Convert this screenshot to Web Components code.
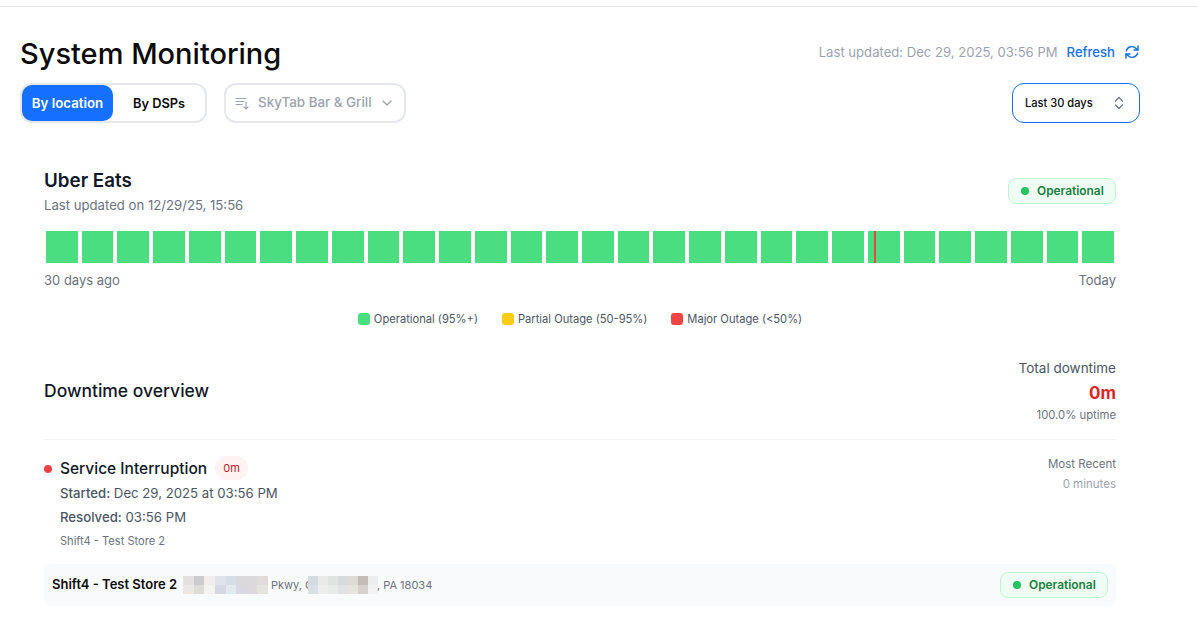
<!DOCTYPE html>
<html lang="en">
<head>
<meta charset="utf-8">
<title>System Monitoring</title>
<style>
  html, body { margin: 0; padding: 0; background: #fff; height: 100%; overflow: hidden; }
  body { font-family: "Inter", "Liberation Sans", sans-serif; color: #111827; }
</style>
</head>
<body>

<monitor-page>
  <page-header></page-header>
  <page-filters></page-filters>
  <service-card name="Uber Eats" updated="Last updated on 12/29/25, 15:56">
    <uptime-bars days="30" incident="23"></uptime-bars>
    <status-legend></status-legend>
    <downtime-summary total="0m" uptime="100.0% uptime"></downtime-summary>
    <downtime-entry title="Service Interruption" duration="0m" started="Dec 29, 2025 at 03:56 PM" resolved="03:56 PM" store="Shift4 - Test Store 2" recency="Most Recent" ago="0 minutes"></downtime-entry>
    <store-row name="Shift4 - Test Store 2"></store-row>
  </service-card>
</monitor-page>

<script>
// small helper so each element only has to say what goes in its shadow root
class ShadowElement extends HTMLElement {
  render(html) {
    if (!this.shadowRoot) this.attachShadow({mode: 'open'});
    this.shadowRoot.innerHTML = html;
  }
}

class MonitorPage extends ShadowElement {
  connectedCallback() {
    this.render(`
      <style>
        :host { display: block; border-top: 1px solid #e5e7eb; margin-top: 6px; padding: 0 58px 0 20px; }
      </style>
      <slot></slot>`);
  }
}

class PageHeader extends ShadowElement {
  connectedCallback() {
    this.render(`
      <style>
        :host { display: flex; justify-content: space-between; align-items: center; box-sizing: border-box; height: 76px; padding-top: 16px; }
        h1 { margin: 0; font-size: 29px; font-weight: 500; color: #0a0a0a; }
        .right { display: flex; align-items: center; font-size: 13.1px; color: #9ca3af; margin-top: -2px; }
        .refresh { color: #1570ef; font-weight: 500; margin-left: 9px; }
        svg { margin-left: 9px; display: block; }
      </style>
      <h1>System Monitoring</h1>
      <div class="right">
        <span>Last updated: Dec 29, 2025, 03:56 PM</span>
        <span class="refresh">Refresh</span>
        <svg width="16" height="16" viewBox="0 0 24 24" fill="none" stroke="#1570ef" stroke-width="2.2" stroke-linecap="round" stroke-linejoin="round">
          <path d="M21 3v6h-6"/><path d="M3.500 10a8.800 8.800 0 0 1 14.600-3.400L21 9"/>
          <path d="M3 21v-6h6"/><path d="M20.500 14a8.800 8.800 0 0 1-14.600 3.400L3 15"/>
        </svg>
      </div>`);
  }
}

class PageFilters extends ShadowElement {
  connectedCallback() {
    this.render(`
      <style>
        :host { display: flex; align-items: stretch; height: 40px; font-size: 13.4px; }
        .seg { display: flex; box-sizing: border-box; width: 187px; border: 2px solid #e5e7eb; border-radius: 12px; }
        .seg span { display: flex; align-items: center; justify-content: center; font-weight: 600; font-size: 12.8px; color: #0a0a0a; flex: 1; }
        .seg .on { flex: none; width: 91px; background: #1570ff; color: #fff; border-radius: 10px; font-size: 13.3px; }
        .loc { display: flex; align-items: center; box-sizing: border-box; width: 182px; margin-left: 17px; padding: 0 11px 0 9px; border: 2px solid #e5e7eb; border-radius: 12px; color: #9ca3af; font-weight: 500; font-size: 13.4px; }
        .loc b { font-weight: 500; margin-left: 9px; flex: 1; white-space: nowrap; position: relative; top: -1px; }
        .range { display: flex; align-items: center; justify-content: space-between; box-sizing: border-box; width: 128px; margin-left: auto; padding: 0 15px 0 12px; border: 1px solid #1570ef; border-radius: 12px; color: #0a0a0a; font-size: 11.1px; font-weight: 500; }
        svg { display: block; flex: none; }
      </style>
      <div class="seg"><span class="on">By location</span><span>By DSPs</span></div>
      <div class="loc">
        <svg width="14" height="14" viewBox="0 0 14 14" fill="none" stroke="#9ca3af" stroke-width="1.1" stroke-linecap="round">
          <path d="M1 2.500h10M1 5.500h8M1 8.500h6"/><path d="M11 6v7M9 11l2 2 2-2"/>
        </svg>
        <b>SkyTab Bar &amp; Grill</b>
        <svg width="12" height="12" viewBox="0 0 12 12" fill="none" stroke="#9ca3af" stroke-width="1.4" stroke-linecap="round" stroke-linejoin="round"><path d="M2 4l4 4 4-4"/></svg>
      </div>
      <div class="range">
        <span>Last 30 days</span>
        <svg width="10" height="14" viewBox="0 0 10 14" fill="none" stroke="#6b7280" stroke-width="1.2" stroke-linecap="round" stroke-linejoin="round"><path d="M1.500 5L5 1.500 8.500 5M1.500 9L5 12.500 8.500 9"/></svg>
      </div>`);
  }
}

class StatusPill extends ShadowElement {
  connectedCallback() {
    this.render(`
      <style>
        :host { display: inline-flex; align-items: center; box-sizing: border-box; width: 108px; height: 26px; padding: 0 0 1px 12px; gap: 8px; background: #f0fdf4; border: 1px solid #bbf7d0; border-radius: 8px; color: #15803d; font-size: 11.9px; font-weight: 600; }
        i { width: 8px; height: 8px; border-radius: 50%; background: #22c55e; }
      </style>
      <i></i><span>Operational</span>`);
  }
}

class ServiceCard extends ShadowElement {
  connectedCallback() {
    this.render(`
      <style>
        :host { display: block; padding: 0 24px; }
        .top { display: flex; justify-content: space-between; align-items: flex-start; padding-top: 46px; height: 62px; }
        h2 { margin: 0; font-size: 18.800px; line-height: 24px; font-weight: 600; color: #111827; }
        p { margin: 2px 0 0; font-size: 13.15px; line-height: 20px; color: #6b7280; }
        status-pill { margin-top: 9px; }
      </style>
      <div class="top">
        <div><h2>${this.getAttribute('name')}</h2><p>${this.getAttribute('updated')}</p></div>
        <status-pill></status-pill>
      </div>
      <slot></slot>`);
  }
}

class UptimeBars extends ShadowElement {
  connectedCallback() {
    const days = Number(this.getAttribute('days'));
    const incident = Number(this.getAttribute('incident'));
    let bars = '';
    for (let i = 0; i < days; i++) {
      bars += i == incident ? '<div class="bar"><i></i></div>' : '<div class="bar"></div>';
    }
    this.render(`
      <style>
        :host { display: block; }
        .bars { display: flex; gap: 4px; padding: 0 2px; height: 32px; }
        .bar { flex: 1; background: #4ade80; position: relative; }
        .bar i { position: absolute; left: 6px; top: 0; bottom: 0; width: 2px; background: #ef4444; }
        .labels { display: flex; justify-content: space-between; margin-top: 7px; font-size: 13px; line-height: 20px; color: #6b7280; }
      </style>
      <div class="bars">${bars}</div>
      <div class="labels"><span>30 days ago</span><span>Today</span></div>`);
  }
}

class StatusLegend extends ShadowElement {
  connectedCallback() {
    const items = [['#4ade80', 'Operational (95%+)'], ['#facc15', 'Partial Outage (50-95%)'], ['#ef4444', 'Major Outage (&lt;50%)']];
    this.render(`
      <style>
        :host { display: flex; justify-content: center; gap: 24px; margin-top: 19px; font-size: 11.15px; line-height: 20px; color: #4b5563; }
        div { display: flex; align-items: center; gap: 4px; }
        i { width: 12px; height: 12px; border-radius: 3px; }
      </style>
      ${items.map(it => `<div><i style="background:${it[0]}"></i><span>${it[1]}</span></div>`).join('')}`);
  }
}

class DowntimeSummary extends ShadowElement {
  connectedCallback() {
    this.render(`
      <style>
        :host { display: flex; justify-content: space-between; align-items: center; margin-top: 29px; padding-bottom: 17px; border-bottom: 1px solid #f3f4f6; }
        h3 { margin: 0; font-size: 17.500px; font-weight: 500; color: #111827; }
        .right { text-align: right; }
        .label { font-size: 13.5px; line-height: 20px; color: #4b5563; }
        .total { font-size: 17px; line-height: 30px; font-weight: 700; color: #dc2626; }
        .up { font-size: 11.3px; line-height: 14px; color: #6b7280; }
      </style>
      <h3>Downtime overview</h3>
      <div class="right">
        <div class="label">Total downtime</div>
        <div class="total">${this.getAttribute('total')}</div>
        <div class="up">${this.getAttribute('uptime')}</div>
      </div>`);
  }
}

class DowntimeEntry extends ShadowElement {
  connectedCallback() {
    const a = n => this.getAttribute(n);
    this.render(`
      <style>
        :host { display: flex; justify-content: space-between; padding-top: 16px; }
        .left { position: relative; padding-left: 16px; }
        .dot { position: absolute; left: 0; top: 9px; width: 8px; height: 8px; border-radius: 50%; background: #ef4444; }
        .head { display: flex; align-items: center; gap: 8px; height: 24px; }
        .title { font-size: 15.500px; font-weight: 500; color: #111827; }
        .dur { display: flex; align-items: center; justify-content: center; width: 33px; height: 24px; border-radius: 12px; background: #fef2f2; color: #b91c1c; font-size: 11px; }
        .line { font-size: 13.2px; line-height: 24px; color: #4b5563; }
        .line b { font-weight: 500; }
        .first { margin-top: 1px; }
        .store { font-size: 11.1px; line-height: 22px; margin-top: 1px; color: #6b7280; }
        .right { text-align: right; font-size: 11.5px; line-height: 20px; color: #6b7280; margin-top: -2px; }
        .ago { color: #9ca3af; }
      </style>
      <div class="left">
        <i class="dot"></i>
        <div class="head"><span class="title">${a('title')}</span><span class="dur">${a('duration')}</span></div>
        <div class="line first"><b>Started:</b> ${a('started')}</div>
        <div class="line"><b>Resolved:</b> ${a('resolved')}</div>
        <div class="store">${a('store')}</div>
      </div>
      <div class="right"><div>${a('recency')}</div><div class="ago">${a('ago')}</div></div>`);
  }
}

class MosaicBlur extends ShadowElement {
  // the address is pixelated in the screenshot; colours are rows of cells
  connectedCallback() {
    const rows = this.getAttribute('cells').split('|').map(r => r.split(','));
    const w = this.getAttribute('cell');
    const cells = rows.map(r => r.map(c => `<i style="background:#${c}"></i>`).join('')).join('');
    this.render(`
      <style>
        :host { display: inline-grid; grid-template-columns: repeat(${rows[0].length}, ${w}px); grid-auto-rows: 9px; }
        i { display: block; }
      </style>${cells}`);
  }
}

class StoreRow extends ShadowElement {
  connectedCallback() {
    this.render(`
      <style>
        :host { display: flex; align-items: center; justify-content: space-between; height: 42px; margin-top: 12px; padding: 0 8px; background: #f9fafb; border-radius: 8px; }
        .left { display: flex; align-items: center; }
        b { font-size: 13px; font-weight: 600; color: #0a0a0a; margin-right: 6px; position: relative; top: -1px; }
        span { font-size: 11px; color: #6b7280; }
        mosaic-blur { margin-right: 3px; }
      </style>
      <div class="left">
        <b>${this.getAttribute('name')}</b>
        <mosaic-blur cell="10.600" cells="e3e1df,cbcbcd,f0eeeb,dfe4ea,d7dfe6,dcd9dd,dcd9dd,e0dcd9|ebe8e4,dcdbd8,f5f3f0,d5d8e2,e2e9ef,d9d8e0,dbd9dd,e5e3de"></mosaic-blur>
        <span>Pkwy, C</span>
        <mosaic-blur style="margin:0 -1px 0 -5px" cell="10" cells="d3dbe3,e9ebe9,e0e4e1,d8dadc,dddcd2,c5bcb6,eeedee|d9e0e6,eeeeec,e9ebe9,e2e2e4,e6e4dc,d6d1cd,f2f2f5"></mosaic-blur>
        <span>, PA 18034</span>
      </div>
      <status-pill></status-pill>`);
  }
}

customElements.define('monitor-page', MonitorPage);
customElements.define('page-header', PageHeader);
customElements.define('page-filters', PageFilters);
customElements.define('status-pill', StatusPill);
customElements.define('service-card', ServiceCard);
customElements.define('uptime-bars', UptimeBars);
customElements.define('status-legend', StatusLegend);
customElements.define('downtime-summary', DowntimeSummary);
customElements.define('downtime-entry', DowntimeEntry);
customElements.define('mosaic-blur', MosaicBlur);
customElements.define('store-row', StoreRow);
</script>
</body>
</html>
